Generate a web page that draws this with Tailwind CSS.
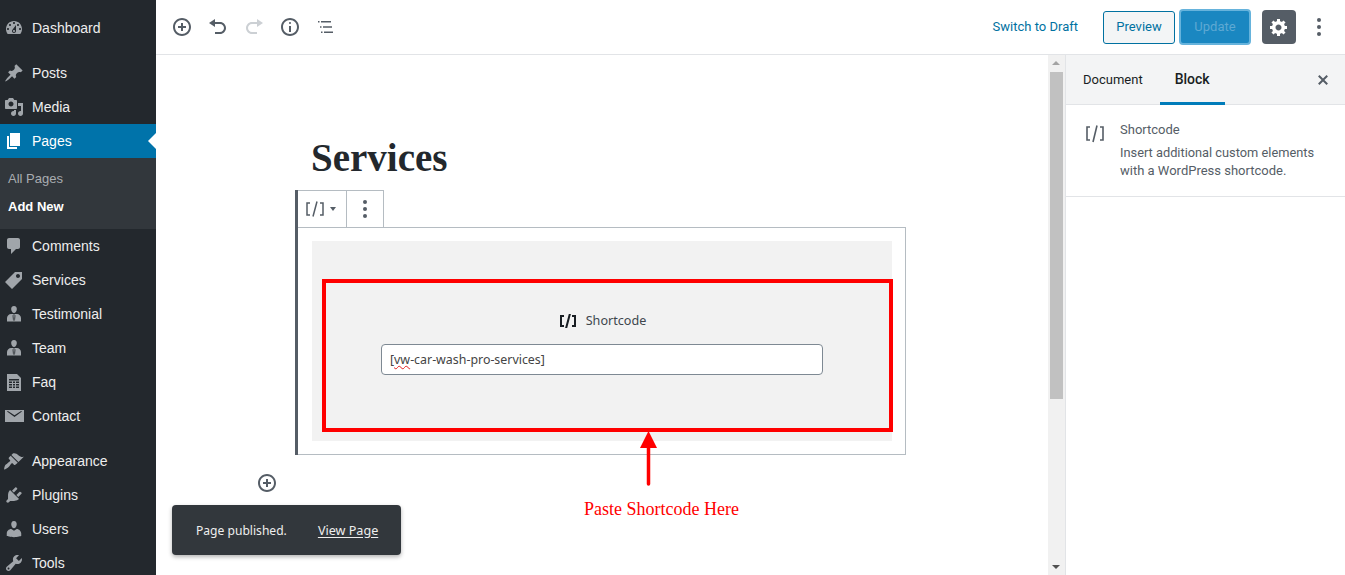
<!DOCTYPE html>
<html lang="en">
<head>
    <meta charset="UTF-8">
    <title>Edit Page</title>
    <script src="https://cdn.jsdelivr.net/npm/@tailwindcss/browser@4"></script>
</head>
<body class="bg-white overflow-hidden">
<div class="flex h-[575px] w-[1345px] overflow-hidden font-['Roboto',sans-serif]">

    <!-- Admin menu -->
    <aside class="w-[156px] shrink-0 bg-[#23282d] pt-[11px] font-['Liberation_Sans',sans-serif] text-[14px] text-[#eeeeee]">
        <a class="flex h-[34px] items-center pl-[32px] relative">
            <svg class="absolute left-[4px] top-[7px] w-[20px] h-[20px] text-[#a0a5aa]" viewBox="0 0 20 20" fill="currentColor"><path d="M3.76 16h12.48c1.1-1.37 1.76-3.11 1.76-5 0-4.42-3.58-8-8-8s-8 3.58-8 8c0 1.89.66 3.63 1.76 5zM10 4c.55 0 1 .45 1 1s-.45 1-1 1-1-.45-1-1 .45-1 1-1zM6 6c.55 0 1 .45 1 1s-.45 1-1 1-1-.45-1-1 .45-1 1-1zm8 0c.55 0 1 .45 1 1s-.45 1-1 1-1-.45-1-1 .45-1 1-1zm-5.37 5.55L12 7v6c0 1.1-.9 2-2 2s-2-.9-2-2c0-.57.24-1.08.63-1.45zM4 10c.55 0 1 .45 1 1s-.45 1-1 1-1-.45-1-1 .45-1 1-1zm12 0c.55 0 1 .45 1 1s-.45 1-1 1-1-.45-1-1 .45-1 1-1zm-5 3c0-.55-.45-1-1-1s-1 .45-1 1 .45 1 1 1 1-.45 1-1z"/></svg>
            Dashboard
        </a>
        <div class="h-[11px]"></div>
        <a class="flex h-[34px] items-center pl-[32px] relative">
            <svg class="absolute left-[4px] top-[7px] w-[20px] h-[20px] text-[#a0a5aa]" viewBox="0 0 20 20" fill="currentColor"><path d="M10.44 3.02l1.82-1.82 6.36 6.35-1.83 1.82c-1.05-.68-2.48-.57-3.41.36l-.75.75c-.92.93-1.04 2.35-.35 3.41l-1.83 1.82-2.41-2.41-2.8 2.79c-.42.42-3.38 2.71-3.8 2.29s1.86-3.39 2.28-3.81l2.79-2.79L4.1 9.36l1.83-1.82c1.05.69 2.48.57 3.4-.36l.75-.75c.93-.92 1.05-2.35.36-3.41z"/></svg>
            Posts
        </a>
        <a class="flex h-[34px] items-center pl-[32px] relative">
            <svg class="absolute left-[4px] top-[7px] w-[20px] h-[20px] text-[#a0a5aa]" viewBox="0 0 20 20" fill="currentColor"><path d="M13 11V4c0-.55-.45-1-1-1h-1.67L9 1H5L3.67 3H2c-.55 0-1 .45-1 1v7c0 .55.45 1 1 1h10c.55 0 1-.45 1-1zM7 4.5c1.38 0 2.5 1.12 2.5 2.5S8.38 9.5 7 9.5 4.5 8.38 4.5 7 5.62 4.5 7 4.5zM14 6h5v10.5c0 1.38-1.12 2.5-2.5 2.5S14 17.88 14 16.5s1.12-2.5 2.5-2.5c.17 0 .34.02.5.05V9h-3V6zm-4 8.05V13h2v3.5c0 1.38-1.12 2.5-2.5 2.5S7 17.88 7 16.5 8.12 14 9.5 14c.17 0 .34.02.5.05z"/></svg>
            Media
        </a>
        <a class="flex h-[34px] items-center pl-[32px] relative bg-[#0073aa] text-white">
            <svg class="absolute left-[4px] top-[7px] w-[20px] h-[20px] text-white" viewBox="0 0 20 20" fill="currentColor"><path d="M6 15V2h10v13H6zm-1 1h8v2H3V5h2v11z"/></svg>
            Pages
            <span class="absolute right-0 top-[9px] w-0 h-0 border-y-[8px] border-y-transparent border-r-[8px] border-r-white"></span>
        </a>
        <div class="h-[71px] bg-[#32373c] pt-[7px] text-[13px]">
            <a class="flex h-[28px] items-center pl-[8px] text-[#a9adb1]">All Pages</a>
            <a class="flex h-[28px] items-center pl-[8px] text-white font-bold">Add New</a>
        </div>
        <a class="flex h-[34px] items-center pl-[32px] relative">
            <svg class="absolute left-[4px] top-[7px] w-[20px] h-[20px] text-[#a0a5aa]" viewBox="0 0 20 20" fill="currentColor"><path d="M5 2h9c1.1 0 2 .9 2 2v7c0 1.1-.9 2-2 2h-2l-5 5v-5H5c-1.1 0-2-.9-2-2V4c0-1.1.9-2 2-2z"/></svg>
            Comments
        </a>
        <a class="flex h-[34px] items-center pl-[32px] relative">
            <svg class="absolute left-[4px] top-[7px] w-[20px] h-[20px] text-[#a0a5aa]" viewBox="0 0 20 20" fill="currentColor"><path d="M11 2h7v7L8 19l-7-7zm3 6c1.1 0 2-.9 2-2s-.9-2-2-2-2 .9-2 2 .9 2 2 2z"/></svg>
            Services
        </a>
        <a class="flex h-[34px] items-center pl-[32px] relative">
            <svg class="absolute left-[4px] top-[7px] w-[20px] h-[20px] text-[#a0a5aa]" viewBox="0 0 20 20" fill="currentColor"><path d="M10 2c2 0 3 1.500 2.800 3.300C12.600 7.200 11.600 9 10 9S7.400 7.200 7.200 5.300C7 3.500 8 2 10 2zM3 17.500V14c0-2.200 2-4 4-4h6c2 0 4 1.800 4 4v3.500z"/><path d="M10 10.500l1 1.200-.4 3.800-.6 1-.6-1-.4-3.800z" stroke="#23282d" stroke-width=".8"/></svg>
            Testimonial
        </a>
        <a class="flex h-[34px] items-center pl-[32px] relative">
            <svg class="absolute left-[4px] top-[7px] w-[20px] h-[20px] text-[#a0a5aa]" viewBox="0 0 20 20" fill="currentColor"><path d="M10 2c2 0 3 1.500 2.800 3.300C12.600 7.200 11.600 9 10 9S7.400 7.200 7.200 5.300C7 3.500 8 2 10 2zM3 17.500V14c0-2.200 2-4 4-4h6c2 0 4 1.800 4 4v3.500z"/><path d="M10 10.500l1 1.200-.4 3.800-.6 1-.6-1-.4-3.800z" stroke="#23282d" stroke-width=".8"/></svg>
            Team
        </a>
        <a class="flex h-[34px] items-center pl-[32px] relative">
            <svg class="absolute left-[4px] top-[7px] w-[20px] h-[20px] text-[#a0a5aa]" viewBox="0 0 20 20" fill="currentColor"><path fill-rule="evenodd" d="M3 2h10l4 4v13H3zM5 7v1.500h10V7zm0 2.500V11h3V9.500zm4 0V11h2V9.500zm3 0V11h3V9.500zM5 12v1.500h3V12zm4 0v1.500h2V12zm3 0v1.500h3V12zm-7 2.500V16h3v-1.500zm4 0V16h2v-1.500zm3 0V16h3v-1.500z"/></svg>
            Faq
        </a>
        <a class="flex h-[34px] items-center pl-[32px] relative">
            <svg class="absolute left-[4px] top-[7px] w-[20px] h-[20px] text-[#a0a5aa]" viewBox="0 0 20 20" fill="currentColor"><path d="M1 4h19v12H1zM3 5.500l7.500 5.500 7.500-5.500-.9-.5-6.600 4.300L3.900 5z" fill-rule="evenodd"/></svg>
            Contact
        </a>
        <div class="h-[11px]"></div>
        <a class="flex h-[34px] items-center pl-[32px] relative">
            <svg class="absolute left-[4px] top-[7px] w-[20px] h-[20px] text-[#a0a5aa]" viewBox="0 0 20 20" fill="currentColor"><path d="M14.480 11.060L7.410 3.990l1.500-1.500c.5-.56 2.300-.47 3.510.32 1.210.8 1.430 1.280 2.910 2.100 1.180.64 2.450 1.260 4.450.85zm-.71.71L6.700 4.700 4.930 6.470c-.39.39-.39 1.020 0 1.410l1.060 1.060c.39.39.39 1.030 0 1.420-.6.6-1.430 1.110-2.210 1.690-.35.26-.7.530-1.010.84C1.430 13.230.4 14.910 0 18.500c1.700-.1 3.500-1.300 4.900-2.700.31-.31.58-.66.84-1.010.58-.78 1.090-1.610 1.690-2.210.39-.39 1.030-.39 1.420 0l1.060 1.060c.39.39 1.020.39 1.410 0z"/></svg>
            Appearance
        </a>
        <a class="flex h-[34px] items-center pl-[32px] relative">
            <svg class="absolute left-[4px] top-[7px] w-[20px] h-[20px] text-[#a0a5aa]" viewBox="0 0 20 20" fill="currentColor"><path d="M13.110 4.360L9.870 7.600 8 5.730l3.240-3.240c.35-.34 1.050-.2 1.560.32.52.51.66 1.210.31 1.550zm-8 1.770l.91-1.120 9.010 9.010-1.190.84c-.71.71-2.630 1.160-3.820 1.160H6.140L4.900 17.260c-.59.59-1.540.59-2.120 0-.59-.58-.59-1.530 0-2.120l1.240-1.240v-3.880c0-1.130.4-3.190 1.090-3.890zm7.260 3.970l3.240-3.240c.34-.35 1.040-.21 1.550.31.52.51.66 1.210.31 1.550l-3.240 3.250z"/></svg>
            Plugins
        </a>
        <a class="flex h-[34px] items-center pl-[32px] relative">
            <svg class="absolute left-[4px] top-[7px] w-[20px] h-[20px] text-[#a0a5aa]" viewBox="0 0 20 20" fill="currentColor"><path d="M10 9.250c-2.270 0-2.730-3.440-2.730-3.440C7 4.020 7.820 2 9.970 2c2.160 0 2.980 2.020 2.710 3.810 0 0-.41 3.440-2.680 3.440zm0 2.570L12.720 10c2.390 0 4.520 2.330 4.520 4.530v2.490s-3.650 1.130-7.240 1.130c-3.650 0-7.240-1.130-7.240-1.130v-2.490c0-2.250 1.940-4.480 4.470-4.480z"/></svg>
            Users
        </a>
        <a class="flex h-[34px] items-center pl-[32px] relative">
            <svg class="absolute left-[4px] top-[7px] w-[20px] h-[20px] text-[#a0a5aa]" viewBox="0 0 20 20" fill="currentColor"><path d="M16.680 9.770c-1.340 1.340-3.300 1.670-4.950.99l-5.410 6.520c-.99.99-2.590.99-3.580 0s-.99-2.590 0-3.570l6.520-5.420c-.68-1.650-.35-3.610.99-4.950 1.280-1.280 3.120-1.620 4.720-1.060l-2.890 2.890 2.820 2.820 2.860-2.870c.53 1.580.18 3.390-1.080 4.650zM3.810 16.210c.4.39 1.040.39 1.430 0 .4-.4.4-1.040 0-1.430-.39-.4-1.030-.4-1.430 0-.39.39-.39 1.030 0 1.430z"/></svg>
            Tools
        </a>
    </aside>

    <div class="flex flex-1 flex-col min-w-0">
        <!-- Top toolbar -->
        <header class="flex h-[55px] shrink-0 items-center justify-between border-b border-[#e2e4e7] pl-[8px] pr-[15px]">
            <div class="flex items-center">
                <span class="flex w-[36px] justify-center text-[#555d66]"><svg class="w-[20px] h-[20px]" viewBox="0 0 20 20" fill="currentColor"><path d="M10 1c-5 0-9 4-9 9s4 9 9 9 9-4 9-9-4-9-9-9zm0 16c-3.900 0-7-3.100-7-7s3.100-7 7-7 7 3.100 7 7-3.100 7-7 7zm1-11H9v3H6v2h3v3h2v-3h3V9h-3V6z"/></svg></span>
                <span class="flex w-[36px] justify-center text-[#555d66]"><svg class="w-[20px] h-[20px]" viewBox="0 0 20 20" fill="currentColor"><path d="M12 5H7V2L1 6l6 4V7h5c2.200 0 4 1.800 4 4s-1.800 4-4 4H7v2h5c3.300 0 6-2.700 6-6s-2.700-6-6-6z"/></svg></span>
                <span class="flex w-[36px] justify-center text-[#ccd0d4]"><svg class="w-[20px] h-[20px]" viewBox="0 0 20 20" fill="currentColor"><path d="M8 5h5V2l6 4-6 4V7H8c-2.200 0-4 1.800-4 4s1.800 4 4 4h5v2H8c-3.300 0-6-2.700-6-6s2.700-6 6-6z"/></svg></span>
                <span class="flex w-[36px] justify-center text-[#555d66]"><svg class="w-[20px] h-[20px]" viewBox="0 0 20 20" fill="currentColor"><path d="M9 15h2V9H9v6zm1-10c-.5 0-1 .5-1 1s.5 1 1 1 1-.5 1-1-.5-1-1-1zm0-4c-5 0-9 4-9 9s4 9 9 9 9-4 9-9-4-9-9-9zm0 16c-3.900 0-7-3.100-7-7s3.100-7 7-7 7 3.100 7 7-3.100 7-7 7z"/></svg></span>
                <span class="flex w-[36px] justify-center text-[#555d66]"><svg class="w-[20px] h-[20px]" viewBox="0 0 20 20" fill="currentColor"><path d="M2 4h1.500v1.500H2zM5 4h10v1.500H5zM4 9.300h1.500v1.500H4zM7 9.300h9v1.500H7zM5 14.500h1.500V16H5zM8 14.500h9V16H8z"/></svg></span>
            </div>
            <div class="flex items-center text-[13px]">
                <a class="mr-[25px] text-[#0071a1]">Switch to Draft</a>
                <button class="mr-[4px] h-[33px] w-[72px] rounded-[3px] border border-[#0071a1] bg-[#f3f5f6] text-[#0071a1]">Preview</button>
                <button class="mr-[11px] h-[36px] w-[72px] rounded-[4px] border-2 border-[#66b3dc] bg-[#1a87c1] text-[#5ea9d3]">Update</button>
                <span class="mr-[21px] flex h-[34px] w-[34px] items-center justify-center rounded-[4px] bg-[#555d66] text-white"><svg class="w-[20px] h-[20px]" viewBox="0 0 20 20" fill="currentColor"><path d="M18 12h-2.180c-.17.7-.44 1.350-.81 1.930l1.540 1.540-2.100 2.100-1.540-1.540c-.58.36-1.230.63-1.910.79V19H8v-2.180c-.68-.16-1.330-.43-1.910-.79l-1.540 1.540-2.120-2.120 1.540-1.540c-.36-.58-.63-1.230-.79-1.910H1V9.030h2.170c.16-.7.44-1.350.8-1.940L2.430 5.550l2.100-2.100 1.540 1.540c.58-.37 1.240-.64 1.930-.81V2h3v2.180c.68.16 1.330.43 1.910.79l1.540-1.540 2.120 2.120-1.540 1.540c.36.59.64 1.240.8 1.940H18V12zm-8.500 1.500c1.660 0 3-1.340 3-3s-1.340-3-3-3-3 1.340-3 3 1.340 3 3 3z"/></svg></span>
                <span class="flex flex-col gap-[3px] pr-[9px]">
                    <i class="block h-[4px] w-[4px] rounded-full bg-[#555d66]"></i>
                    <i class="block h-[4px] w-[4px] rounded-full bg-[#555d66]"></i>
                    <i class="block h-[4px] w-[4px] rounded-full bg-[#555d66]"></i>
                </span>
            </div>
        </header>

        <div class="flex min-h-0 flex-1">
            <!-- Editor canvas -->
            <main class="relative w-[892px] shrink-0 overflow-hidden pt-[79px]">
                <h1 class="ml-[155px] mb-[8px] h-[48px] font-['Liberation_Serif',serif] text-[39px] leading-[48px] font-bold text-[#23282d]">Services</h1>
                <div class="ml-[139px] w-[611px] border-l-[3px] border-[#555d66]">
                    <div class="flex h-[37px] w-[86px] border-t border-r border-[#b5bcc2] text-[#555d66]">
                        <span class="flex w-[49px] items-center gap-[4px] border-r border-[#b5bcc2] pl-[6px]">
                            <svg class="w-[22px] h-[20px]" viewBox="0 0 22 20" fill="none" stroke="currentColor" stroke-width="1.500"><path d="M6 4H3v12h3M16 4h3v12h-3M13 2.500L9 17.500"/></svg>
                            <span class="h-0 w-0 border-x-[3px] border-t-[4px] border-x-transparent border-t-[#555d66]"></span>
                        </span>
                        <span class="flex flex-1 flex-col items-center justify-center gap-[3px]">
                            <i class="block h-[4px] w-[4px] rounded-full bg-[#555d66]"></i>
                            <i class="block h-[4px] w-[4px] rounded-full bg-[#555d66]"></i>
                            <i class="block h-[4px] w-[4px] rounded-full bg-[#555d66]"></i>
                        </span>
                    </div>
                    <div class="border-y border-r border-[#b5bcc2] pt-[13px] pb-[13px] pl-[14px] pr-[13px]">
                        <div class="relative flex h-[200px] flex-col items-center bg-[#f2f2f2] pt-[70px] font-['Noto_Sans',sans-serif] text-[13px]">
                            <div class="flex h-[20px] items-center text-[#23282d]">
                                <svg class="mr-[8px] w-[20px] h-[20px] text-[#191e23]" viewBox="0 0 20 20" fill="currentColor"><path d="M6 14H4V6h2V4H2v12h4M7.100 17h2.100l3.700-14h-2.100M14 4v2h2v8h-2v2h4V4"/></svg>
                                <span class="text-[12.6px] text-[#40464d]">Shortcode</span>
                            </div>
                            <div class="mt-[13px] flex h-[31px] w-[442px] items-center rounded-[4px] border border-[#7e8993] bg-white px-[8px] pt-[2px] text-[12.4px] text-[#444444]">[<span class="underline decoration-wavy decoration-[#e02020] decoration-1">vw</span>-car-wash-pro-services]</div>
                            <!-- annotation box -->
                            <div class="absolute left-[10px] top-[38px] h-[153px] w-[571px] border-4 border-[#ff0000]"></div>
                        </div>
                    </div>
                </div>

                <svg class="absolute left-[102px] top-[419px] w-[18px] h-[18px] text-[#555d66]" viewBox="1 1 18 18" fill="currentColor"><path d="M10 1c-5 0-9 4-9 9s4 9 9 9 9-4 9-9-4-9-9-9zm0 16c-3.900 0-7-3.100-7-7s3.100-7 7-7 7 3.100 7 7-3.100 7-7 7zm1-11H9v3H6v2h3v3h2v-3h3V9h-3V6z"/></svg>

                <!-- annotation arrow -->
                <svg class="absolute left-[484px] top-[376px] w-[17px] h-[55px]" viewBox="0 0 17 55"><path d="M8.500 0L17 17H0z" fill="#ff0000"/><path d="M8.500 15V53" stroke="#ff0000" stroke-width="3.500" stroke-linecap="round"/></svg>
                <div class="absolute left-[428px] top-[442px] h-[24px] font-['Liberation_Serif',serif] text-[18px] leading-[24px] text-[#ff0000]">Paste Shortcode Here</div>

                <!-- snackbar -->
                <div class="absolute left-[16px] bottom-[20px] flex h-[50px] w-[229px] items-center rounded-[4px] bg-[#32373c] pl-[24px] pt-[2px] font-['Noto_Sans',sans-serif] text-[#eeeeee] shadow-[0_2px_4px_rgba(0,0,0,0.3)]">
                    <span class="text-[12.1px]">Page published.</span>
                    <a class="ml-[31px] text-[12.6px] underline underline-offset-2">View Page</a>
                </div>
            </main>

            <!-- Scrollbar -->
            <div class="relative w-[17px] shrink-0 bg-[#f1f1f1]">
                <span class="absolute left-[4px] top-[6px] h-0 w-0 border-x-[4px] border-b-[4px] border-x-transparent border-b-[#a3a3a3]"></span>
                <div class="absolute left-[2px] top-[17px] h-[327px] w-[13px] bg-[#c1c1c1]"></div>
                <span class="absolute left-[4px] bottom-[6px] h-0 w-0 border-x-[4px] border-t-[4px] border-x-transparent border-t-[#505050]"></span>
            </div>

            <!-- Settings sidebar -->
            <aside class="flex-1 border-l border-[#e2e4e7] text-[13px]">
                <div class="relative flex h-[50px] items-center border-b border-[#e2e4e7] bg-[#f3f4f5] text-[#191e23]">
                    <span class="ml-[17px]">Document</span>
                    <span class="ml-[32px] text-[14px] font-medium">Block</span>
                    <span class="absolute left-[94px] -bottom-px h-[3px] w-[65px] bg-[#007cba]"></span>
                    <svg class="absolute right-[12px] top-[15px] w-[20px] h-[20px] text-[#555d66]" viewBox="0 0 20 20" fill="currentColor"><path d="M14.950 6.460L11.410 10l3.540 3.540-1.410 1.410L10 11.420l-3.530 3.530-1.420-1.420L8.580 10 5.050 6.470l1.420-1.420L10 8.580l3.540-3.530z"/></svg>
                </div>
                <div class="flex h-[92px] border-b border-[#e2e4e7] pt-[16px] pl-[18px] text-[#555d66]">
                    <svg class="mt-[3px] mr-[14px] w-[22px] h-[20px] shrink-0" viewBox="0 0 22 20" fill="none" stroke="currentColor" stroke-width="1.600"><path d="M6 3H3v13h3M16 3h3v13h-3M13 1.500L9 18"/></svg>
                    <div class="leading-[18px]">
                        <div class="mb-[5px]">Shortcode</div>
                        <div><span class="text-[12.8px]">Insert additional custom elements</span><br>with a WordPress shortcode.</div>
                    </div>
                </div>
            </aside>
        </div>
    </div>
</div>
</body>
</html>
